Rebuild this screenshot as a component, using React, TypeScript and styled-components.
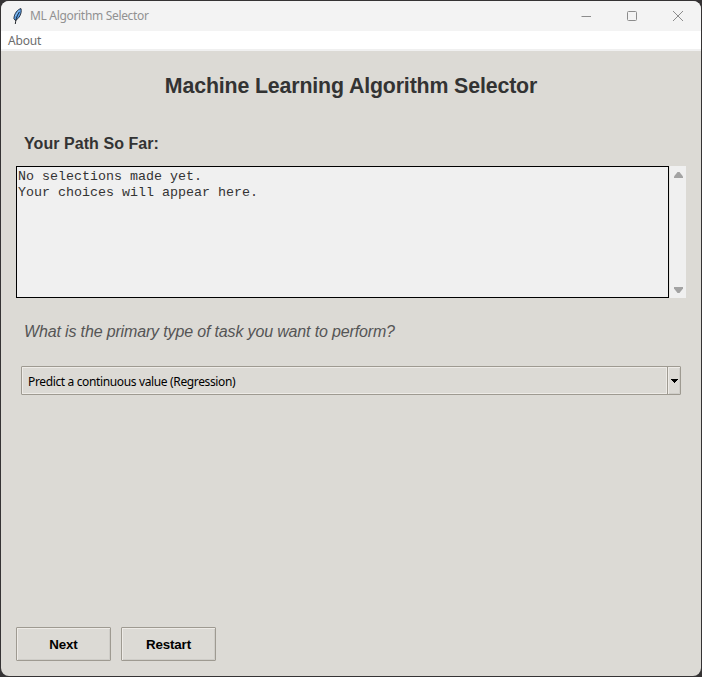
import React from "react";
import styled, { createGlobalStyle } from "styled-components";

const GlobalStyle = createGlobalStyle`
  * { box-sizing: border-box; }
  body { margin: 0; background: #2f2d2e; overflow: hidden; }
`;

const Desktop = styled.div`
  width: 702px;
  height: 677px;
  padding: 1px;
  background: #353334;
`;

const Window = styled.div`
  display: flex;
  flex-direction: column;
  height: 675px;
  border-radius: 8px;
  overflow: hidden;
  background: #dcdad5;
  font-family: "Liberation Sans", Arial, sans-serif;
  white-space: nowrap;
`;

const TitleBar = styled.header`
  display: flex;
  align-items: center;
  flex: none;
  height: 30px;
  padding-left: 10px;
  background: #f3f3f3;
`;

const WindowTitle = styled.span`
  flex: 1;
  margin-left: 6px;
  font: 12px/16px "Noto Sans", sans-serif;
  letter-spacing: -0.32px;
  color: #919191;
`;

const Caption = styled.button`
  display: flex;
  align-items: center;
  justify-content: center;
  width: 46px;
  height: 30px;
  padding: 0;
  border: 0;
  background: none;
`;

const MenuBar = styled.nav`
  flex: none;
  height: 20px;
  padding-left: 7px;
  background: #fff;
  border-bottom: 2px solid #f0f0f0;
`;

const MenuItem = styled.span`
  display: block;
  font: 12px/20px "Noto Sans", sans-serif;
  letter-spacing: -0.15px;
  color: #6d6d6d;
`;

const Body = styled.main`
  display: flex;
  flex-direction: column;
  flex: 1;
  padding: 0 15px 15px;
`;

const Heading = styled.h1`
  margin: 21px 0 0;
  font-size: 21.33px;
  line-height: 28px;
  letter-spacing: -0.14px;
  text-align: center;
  color: #333;
`;

const SectionLabel = styled.h2`
  margin: 33px 0 0 8px;
  font-size: 16px;
  line-height: 22px;
  letter-spacing: 0.06px;
  color: #333;
`;

const PathPanel = styled.section`
  display: flex;
  height: 132px;
  margin-top: 11px;
`;

const PathText = styled.pre`
  flex: 1;
  margin: 0;
  padding: 2px 1px 1px;
  border: 1px solid #000;
  background: #f0f0f0;
  font: 13.33px/16px "Liberation Mono", monospace;
  color: #333;
`;

const ScrollBar = styled.div`
  display: flex;
  flex-direction: column;
  justify-content: space-between;
  align-items: center;
  width: 17px;
  padding: 6px 0 5px;
  border-left: 1px solid #e6e4e0;
  background: #f0f0f0;
`;

const Question = styled.p`
  margin: 23px 0 0 8px;
  font-size: 16px;
  font-style: italic;
  line-height: 22px;
  letter-spacing: -0.15px;
  color: #555;
`;

const Combo = styled.div`
  display: flex;
  height: 29px;
  margin: 23px 5px 0;
  border: 1px solid #9e9a91;
  border-radius: 1px;
`;

const ComboValue = styled.span`
  flex: 1;
  padding-left: 5px;
  border: 1px solid #eeebe7;
  font: 12px/27px "Noto Sans", sans-serif;
  letter-spacing: -0.36px;
  color: #000;
`;

const ComboArrow = styled.span`
  display: flex;
  align-items: center;
  justify-content: center;
  width: 13px;
  border-left: 1px solid #9e9a91;
  box-shadow: inset 1px 1px #eeebe7, inset -1px -1px #cfcdc8;
`;

const Actions = styled.footer`
  display: flex;
  gap: 10px;
  margin-top: auto;
`;

const ActionButton = styled.button`
  width: 95px;
  height: 34px;
  padding: 0;
  border: 1px solid #9e9a91;
  border-radius: 1px;
  background: #dcdad5;
  box-shadow: inset 1px 1px #eeebe7, inset -1px -1px #cfcdc8;
  font: bold 13.33px "Liberation Sans", Arial, sans-serif;
  letter-spacing: -0.15px;
  color: #000;
`;

const Feather = () => (
  <svg width="13" height="18" viewBox="0 0 13 18">
    <path d="M10 1.6C6.6 2.2 3.1 6.8 2.9 11.6l1.5 1.9C7.8 11.8 11.2 6.5 10 1.6Z" fill="#5a9ee6" stroke="#1c2430" strokeWidth="0.9" />
    <path d="M8.3 5C6.5 8 5 11 4.3 17" fill="none" stroke="#101418" strokeWidth="0.9" />
    <path d="M8 3.5 4.3 9" stroke="#9ccbf5" strokeWidth="0.8" />
  </svg>
);

const Triangle = ({ down = false }: { down?: boolean }) => (
  <svg width="9" height="6" viewBox="0 0 9 6">
    <path d={down ? "M0 0h9v1.5L5.5 6h-2L0 1.5Z" : "M0 6h9V4.5L5.5 0h-2L0 4.5Z"} fill="#a3a3a3" />
  </svg>
);

export default function App() {
  return (
    <Desktop>
      <GlobalStyle />
      <Window>
        <TitleBar>
          <Feather />
          <WindowTitle>ML Algorithm Selector</WindowTitle>
          <Caption aria-label="Minimize">
            <svg width="10" height="10" viewBox="-.5 0 10 10"><path d="M0 5.5h10" stroke="#8c8c8c" /></svg>
          </Caption>
          <Caption aria-label="Maximize">
            <svg width="10" height="10"><rect x=".5" y=".5" width="9" height="9" rx="1" fill="none" stroke="#8c8c8c" /></svg>
          </Caption>
          <Caption aria-label="Close">
            <svg width="10" height="10"><path d="m0 0 10 10M10 0 0 10" stroke="#8c8c8c" /></svg>
          </Caption>
        </TitleBar>
        <MenuBar><MenuItem>About</MenuItem></MenuBar>
        <Body>
          <Heading>Machine Learning Algorithm Selector</Heading>
          <SectionLabel>Your Path So Far:</SectionLabel>
          <PathPanel>
            <PathText>{"No selections made yet.\nYour choices will appear here."}</PathText>
            <ScrollBar><Triangle /><Triangle down /></ScrollBar>
          </PathPanel>
          <Question>What is the primary type of task you want to perform?</Question>
          <Combo>
            <ComboValue>Predict a continuous value (Regression)</ComboValue>
            <ComboArrow>
              <svg width="7" height="4"><path d="M0 0h7v1H6v1H5v1H4v1H3V3H2V2H1V1H0Z" fill="#000" /></svg>
            </ComboArrow>
          </Combo>
          <Actions>
            <ActionButton>Next</ActionButton>
            <ActionButton>Restart</ActionButton>
          </Actions>
        </Body>
      </Window>
    </Desktop>
  );
}
